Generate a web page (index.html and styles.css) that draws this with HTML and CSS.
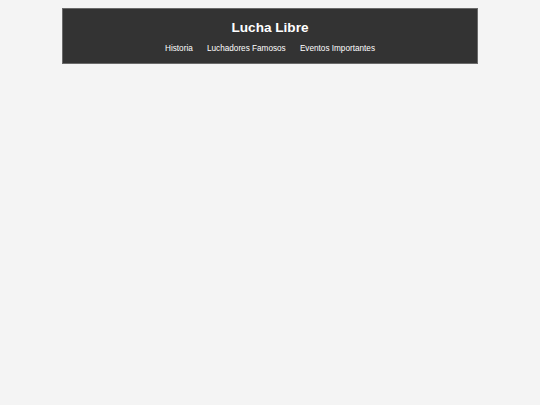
FILE: index.html
```html
<!DOCTYPE html>
<html lang="es">
<head>
<meta charset="utf-8">
<title>Lucha Libre</title>
<link rel="stylesheet" href="styles.css">
</head>
<body>
<header class="site-header">
  <h1 class="site-title">Lucha Libre</h1>
  <nav class="site-nav">
    <a href="#historia">Historia</a>
    <a href="#luchadores">Luchadores Famosos</a>
    <a href="#eventos">Eventos Importantes</a>
  </nav>
</header>
</body>
</html>
```
FILE: styles.css
```css
html, body {
  background: #f4f4f4;
}
body {
  margin: 8px 0 0;
  font-family: "Liberation Sans", Arial, sans-serif;
}
.site-header {
  width: 416px;
  margin: 0 auto;
  background: #333333;
  border: 1px solid #6a6a6a;
  box-sizing: border-box;
  height: 56px;
  padding-top: 11px;
  text-align: center;
  color: #ffffff;
}
.site-title {
  margin: 0;
  font-size: 13.6px;
  line-height: 16px;
  font-weight: bold;
}
.site-nav {
  margin-top: 8px;
  display: flex;
  justify-content: center;
  gap: 14.2px;
  font-size: 8.2px;
  line-height: 10px;
}
.site-nav a {
  color: #ffffff;
  text-decoration: none;
}
```
